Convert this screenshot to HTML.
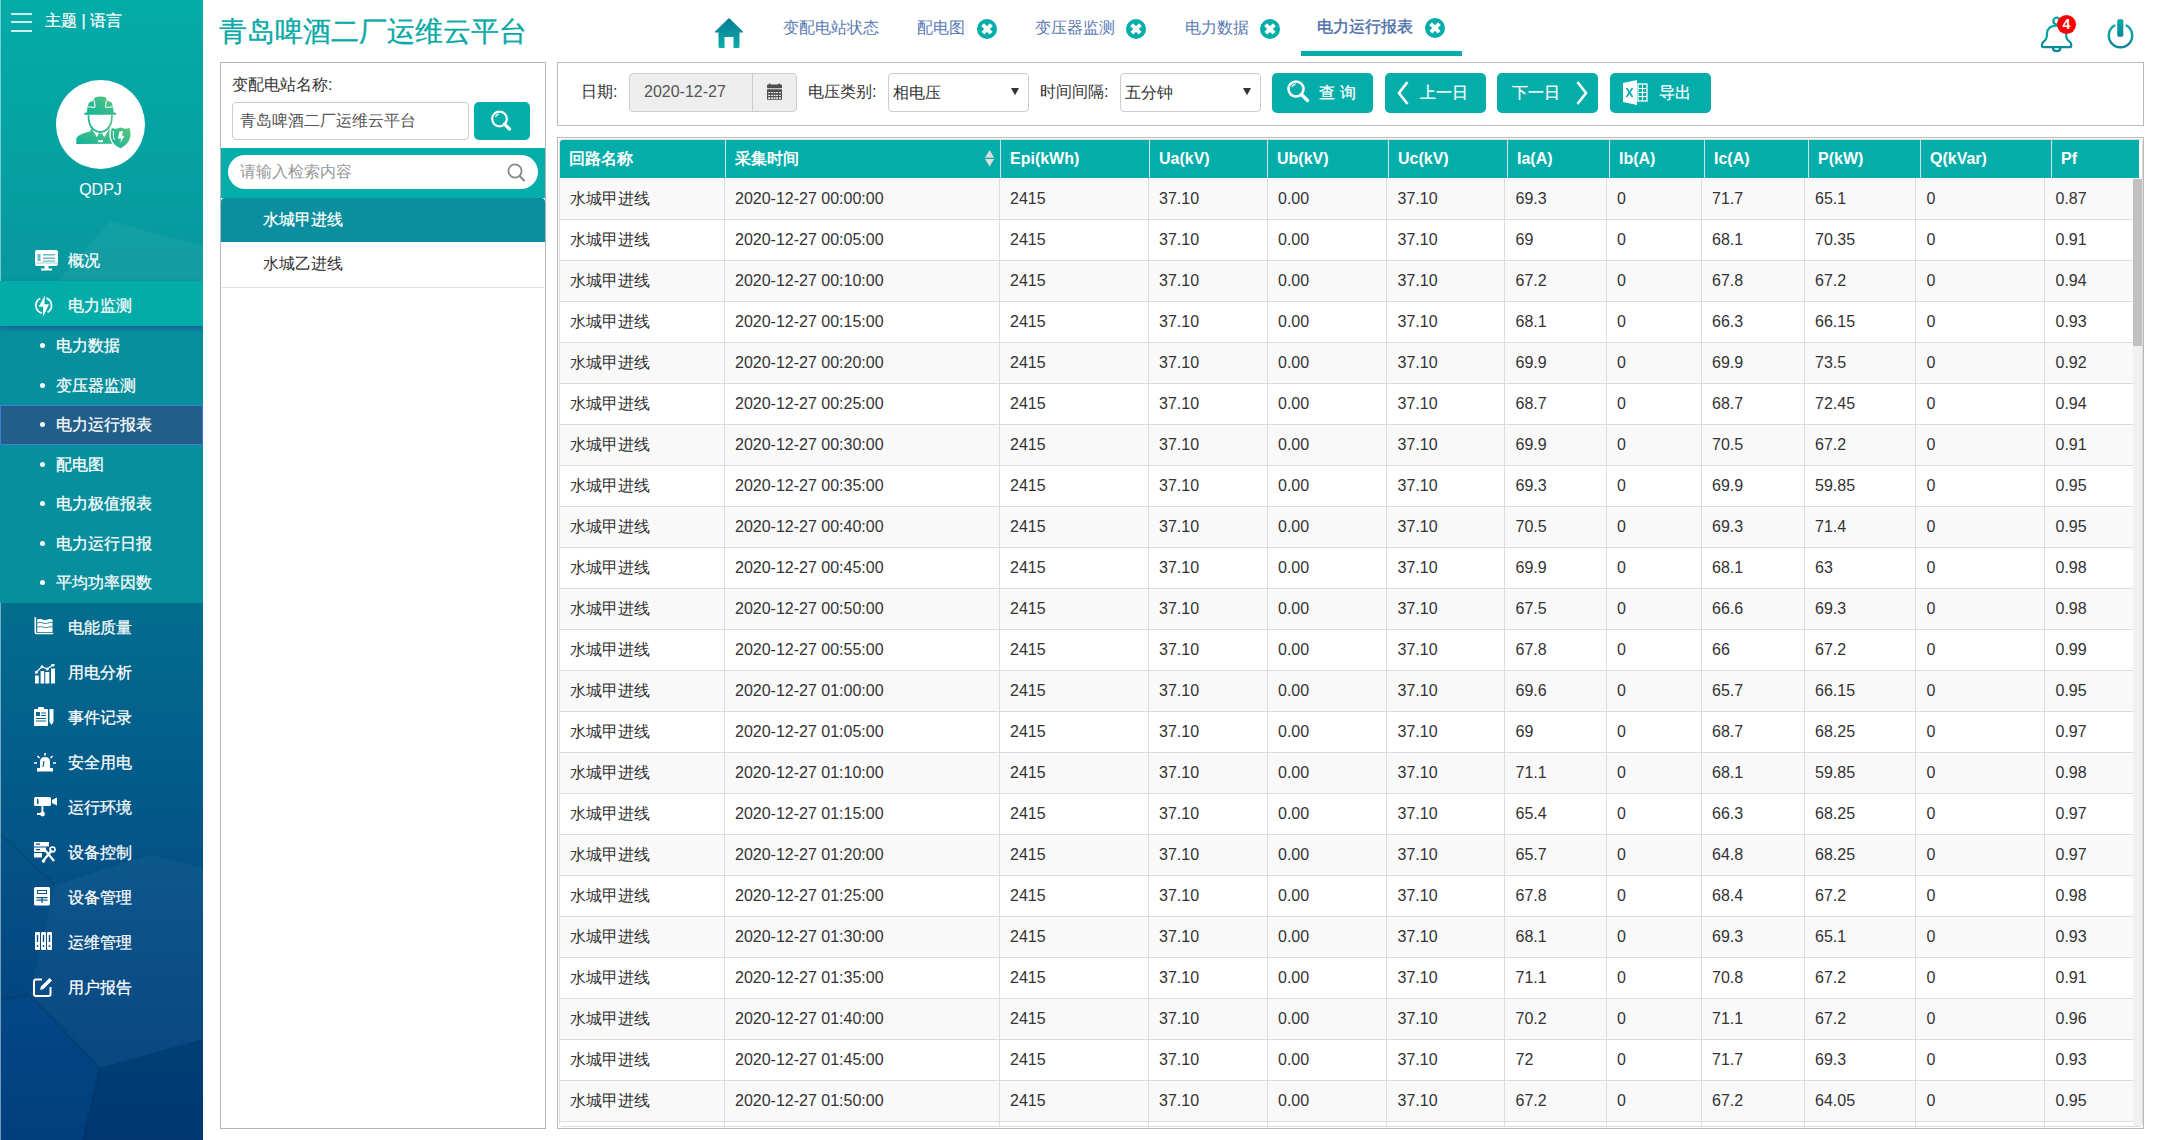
<!DOCTYPE html>
<html><head><meta charset="utf-8">
<style>
*{box-sizing:border-box}
html,body{margin:0;padding:0}
body{width:2160px;height:1140px;overflow:hidden;position:relative;background:#fff;font-family:"Liberation Sans",sans-serif;font-size:16px;color:#333}
.abs{position:absolute}
#side{position:absolute;left:0;top:0;width:203px;height:1140px;background:linear-gradient(180deg,#03aca8 0%,#08989f 24%,#05848f 45%,#026e8e 53%,#044e86 79%,#003b78 100%);overflow:hidden;color:#fff}
.ham{position:absolute;left:11px;width:21px;height:2px;background:rgba(255,255,255,.8)}
.menu{position:absolute;left:0;width:203px;height:45px;line-height:45px;font-size:16px;color:#fff;-webkit-text-stroke:.25px #fff}
.menu .ic{position:absolute;left:34px;top:12px;width:22px;height:22px}
.menu .tx{position:absolute;left:68px;top:2px}
.sub{position:absolute;left:0;width:203px;height:39.5px;line-height:39.5px;font-size:16px;color:#fff;-webkit-text-stroke:.25px #fff}
.sub:before{content:"";position:absolute;left:40px;top:17px;width:5px;height:5px;border-radius:50%;background:#fff}
.sub .tx{position:absolute;left:56px;top:0}
#title{position:absolute;left:219px;top:13px;font-size:28.3px;line-height:36px;color:#08a9a6;white-space:nowrap;-webkit-text-stroke:.3px #08a9a6}
.tab{position:absolute;top:16px;font-size:16px;line-height:24px;color:#5a7ab3;white-space:nowrap}
.xc{position:absolute;width:20px;height:20px;border-radius:50%;background:#03ada9}
.xc:before,.xc:after{content:"";position:absolute;left:4px;top:7.5px;width:12px;height:3.6px;background:#fff;transform:rotate(45deg)}
.xc:after{transform:rotate(-45deg)}
.panel{position:absolute;border:1px solid #b9b9b9;background:#fff}
.btn{position:absolute;top:73px;height:40px;border-radius:5px;background:#03ada9;color:#fff;font-size:16px;line-height:39px}
table{border-collapse:collapse;table-layout:fixed}
#hd{position:absolute;left:560px;top:140px;width:1579px;height:38px;background:#05aba7}
#hd td{height:38px;padding:0 0 0 11px;color:#fff;font-weight:bold;font-size:16px;border-left:1px solid #e8f6f6;white-space:nowrap}
#hd td:first-child{border-left:none}
#bd{position:absolute;left:560px;top:178px;width:1573px}
#bd td{height:41px;padding:0 0 0 11px;font-size:16px;color:#333;border:1px solid #dddddd;border-top:none;white-space:nowrap;overflow:hidden}
#bd tr:nth-child(odd) td{background:#f9f9f9}
#bd tr:nth-child(even) td{background:#fff}
.hdt{top:140px;height:38px;line-height:38px;color:#fff;font-weight:bold;font-size:16px;white-space:nowrap}
.bdt{height:41px;line-height:41px;font-size:16px;color:#333;white-space:nowrap}
</style></head><body>
<div id="side">
  <svg class="abs" style="left:0;top:0" width="203" height="1140" viewBox="0 0 203 1140">
    <polygon points="110,221 203,246 203,281 58,281" fill="#fff" opacity=".045"/>
    <polygon points="55,885 150,855 203,868 203,1039 100,1068 30,995" fill="#fff" opacity=".035"/>
    <polygon points="0,1000 30,995 100,1068 83,1140 0,1140" fill="#1a6ad0" opacity=".08"/>
    <polygon points="100,1068 203,1039 203,1140 83,1140" fill="#000" opacity=".06"/>
    <path d="M0 834 L55 885 M0 1000 L30 995 L100 1068 L83 1140" stroke="#000" stroke-opacity=".07" stroke-width="3" fill="none"/>
    <rect x="0" y="0" width="1" height="1140" fill="#fff" opacity=".45"/>
  </svg>
  <div class="ham" style="top:13px"></div>
  <div class="ham" style="top:21px"></div>
  <div class="ham" style="top:30px"></div>
  <div class="abs" style="left:45px;top:9px;font-size:16px;line-height:24px;color:#fff;white-space:nowrap;-webkit-text-stroke:.25px #fff">主题 | 语言</div>
  <div class="abs" style="left:56px;top:80px;width:89px;height:89px;border-radius:50%;background:#fff"></div>
  <svg class="abs" style="left:56px;top:80px" width="89" height="89" viewBox="0 0 89 89">
    <defs><linearGradient id="ag" x1="0" y1="1" x2="1" y2="0"><stop offset="0" stop-color="#10b2a0"/><stop offset="1" stop-color="#5dc679"/></linearGradient></defs>
    <path fill="url(#ag)" d="M28.3 34.8 L28.5 33 L31 32.3 Q31.2 26 33 22.5 L38 20.3 L38.6 17.6 Q44.2 15.2 50 17.6 L50.6 20.3 L55.6 22.5 Q57.5 26 57.6 32.3 L60 33 L60.3 34.8 Z"/>
    <path fill="none" stroke="#fff" stroke-width="1.1" d="M38.2 20.5 L39.2 27.2 M50.4 20.5 L49.5 27.2 M32 26.8 L39 27.5 M49.6 27.5 L57 26.8"/>
    <path fill="none" stroke="url(#ag)" stroke-width="1.8" d="M32.5 35 Q32.3 50.5 44.3 52.2 Q56 50.5 56 35"/>
    <path fill="url(#ag)" d="M20.3 64 L20.3 58.5 Q22 54 34.5 51.3 L35 48 L36.3 49.5 L40.8 57.3 L42.8 53.3 L44.3 53.6 L45.9 53.3 L48.2 57.3 L53 49.5 L54.2 48.2 L57.2 52 L56.8 63.8 Z"/>
    <path fill="#fff" d="M42 60.2 h5 v2 h-5z"/>
    <path fill="#fff" d="M54.6 47.2 Q56 48 56.8 48.5 L56.8 64 L55 64 Q54.3 56 54.6 47.2Z" opacity="0"/>
    <path fill="url(#ag)" stroke="#fff" stroke-width="1.4" d="M55.2 47.2 Q59 49 64.5 46.5 Q70 49 74.2 47.2 Q75.5 51 75 57 Q73.5 65 64.5 69.2 Q55.5 65 54.2 57 Q53.7 51 55.2 47.2Z"/>
    <path fill="none" stroke="#fff" stroke-width="1" d="M57.4 51 Q57 56 58.2 60"/>
    <path fill="#fff" d="M63.6 51.2 L67.2 51.2 L65.8 55.6 L68.3 56.1 L64.3 63.2 L65.1 58.6 L62 58.4 Z"/>
  </svg>
  <div class="abs" style="left:0;top:178px;width:201px;text-align:center;font-size:16px;line-height:24px;color:#fff">QDPJ</div>

  <div class="menu" style="top:236px">
    <svg class="abs" style="left:35px;top:14px" width="23" height="21" viewBox="0 0 23 21"><rect x="0" y="0" width="23" height="16" rx="2" fill="#fff"/><rect x="2.5" y="4" width="3" height="7" fill="#0b8f9e" opacity=".6"/><rect x="8" y="4" width="12" height="1.5" fill="#0b8f9e" opacity=".6"/><rect x="8" y="7.5" width="12" height="1.5" fill="#0b8f9e" opacity=".6"/><rect x="8" y="10.5" width="12" height="1.2" fill="#0b8f9e" opacity=".6"/><rect x="0" y="12.5" width="23" height="1" fill="#0b8f9e" opacity=".4"/><rect x="9.5" y="16" width="4" height="3" fill="#fff"/><rect x="6" y="18.5" width="11" height="2" fill="#fff"/></svg>
    <span class="tx">概况</span>
  </div>
  
  <div class="menu" style="top:281px;z-index:2">
    <svg class="abs" style="left:35px;top:14px" width="18" height="23" viewBox="0 0 18 23"><path d="M5.28 3.49 A7.8 7.8 0 0 0 7.08 18.13 M11.37 3.17 A7.8 7.8 0 0 1 12.48 17.32" fill="none" stroke="#fff" stroke-width="1.7"/><path d="M10 0.2 L3.6 11.8 L8.2 11.8 L7.9 22 L14 9.2 L9.3 9.2 Z" fill="#fff"/></svg>
    <span class="tx">电力监测</span>
  </div>
  <div class="abs" style="left:0;top:326px;width:203px;height:277px;background:#088f9d"></div>
  <div class="abs" style="left:0;top:281px;width:203px;height:45px;background:#02aca8;box-shadow:0 3px 5px rgba(45,55,150,.5);z-index:1"></div>
  <div class="abs" style="left:0;top:404.5px;width:203px;height:40px;background:#235d8a;border:1px solid #3b7fd3"></div>
  <div class="sub" style="top:326px"><span class="tx">电力数据</span></div>
  <div class="sub" style="top:365.5px"><span class="tx">变压器监测</span></div>
  <div class="sub" style="top:405px"><span class="tx">电力运行报表</span></div>
  <div class="sub" style="top:444.5px"><span class="tx">配电图</span></div>
  <div class="sub" style="top:484px"><span class="tx">电力极值报表</span></div>
  <div class="sub" style="top:523.5px"><span class="tx">电力运行日报</span></div>
  <div class="sub" style="top:563px"><span class="tx">平均功率因数</span></div>

  <div class="menu" style="top:603px">
    <svg class="abs" style="left:34px;top:14px" width="20" height="18" viewBox="0 0 20 18"><path d="M1.3 0.3 V15.3 Q1.3 16.5 2.5 16.5 H19.2" fill="none" stroke="#fff" stroke-width="1.6"/><path d="M3.2 2.6 Q5.5 1.2 8.5 2.4 Q11.5 3.6 14.5 2.2 Q16.5 1.4 18.5 2.6 V15 H3.2Z" fill="#fff"/><path d="M3.2 6 Q6 4.6 9 5.9 Q12 7.2 15 5.8 Q17 5 18.5 5.8 M3.2 10.2 Q6 8.8 9 10.1 Q12 11.4 15 10 Q17 9.2 18.5 10" fill="none" stroke="#07708f" stroke-width="1.1" opacity=".75"/></svg>
    <span class="tx">电能质量</span>
  </div>
  <div class="menu" style="top:648px">
    <svg class="abs" style="left:35px;top:15.5px" width="21" height="20" viewBox="0 0 21 20"><rect x="0" y="11.5" width="3.8" height="8" fill="#fff"/><rect x="5.6" y="7" width="3.6" height="12.5" fill="#fff"/><rect x="10.3" y="8" width="4" height="11.5" fill="#fff"/><rect x="16" y="4.5" width="4" height="15" fill="#fff"/><path d="M1.3 8.3 L7 2.7 L12.3 5 L18 0.8" fill="none" stroke="#fff" stroke-width="1.2"/><circle cx="1.3" cy="8.3" r="1.5" fill="#fff"/><circle cx="7" cy="2.7" r="1.5" fill="#fff"/><circle cx="12.3" cy="5" r="1.5" fill="#fff"/><circle cx="18" cy="0.9" r="1.6" fill="#fff"/></svg>
    <span class="tx">用电分析</span>
  </div>
  <div class="menu" style="top:693px">
    <svg class="abs" style="left:34px;top:14px" width="20" height="19" viewBox="0 0 20 19"><rect x="0" y="2" width="14" height="17" rx="1" fill="#fff"/><rect x="4" y="0" width="6" height="3" rx="1" fill="#fff"/><rect x="2" y="5" width="4" height="4" fill="#066c8d"/><rect x="7" y="5.5" width="5" height="1" fill="#066c8d"/><rect x="7" y="8" width="5" height="1" fill="#066c8d"/><rect x="2" y="11" width="10" height="1" fill="#066c8d"/><rect x="2" y="13.5" width="10" height="1" fill="#066c8d"/><path d="M15.5 2 h4 v13 l-2 3 l-2 -3z" fill="#fff"/></svg>
    <span class="tx">事件记录</span>
  </div>
  <div class="menu" style="top:738px">
    <svg class="abs" style="left:34px;top:15px" width="22" height="19" viewBox="0 0 22 19"><path d="M6 15 V9 Q6 4 11 4 Q16 4 16 9 V15Z" fill="#fff"/><rect x="3" y="15" width="16" height="3.5" fill="#fff"/><path d="M10 8 L9 14" stroke="#06668b" stroke-width="1.2"/><path d="M11 0 V2.5 M3.5 3 L5.5 5 M18.5 3 L16.5 5 M0 10 H3 M19 10 H22" stroke="#fff" stroke-width="1.6"/></svg>
    <span class="tx">安全用电</span>
  </div>
  <div class="menu" style="top:783px">
    <svg class="abs" style="left:34px;top:14px" width="24" height="21" viewBox="0 0 24 21"><rect x="0" y="0" width="17" height="9" rx="1.5" fill="#fff"/><rect x="3" y="2" width="1.5" height="5" fill="#06628a"/><path d="M18 3 L23 0.5 V8.5 L18 6Z" fill="#fff"/><rect x="7.5" y="9" width="1.8" height="8" fill="#fff"/><rect x="3" y="16" width="6" height="2" fill="#fff"/><circle cx="8.5" cy="17" r="2.4" fill="#fff"/></svg>
    <span class="tx">运行环境</span>
  </div>
  <div class="menu" style="top:828px">
    <svg class="abs" style="left:34px;top:14px" width="22" height="21" viewBox="0 0 22 21"><rect x="0" y="0" width="15" height="4.5" fill="#fff"/><rect x="0" y="5.5" width="12" height="4.5" fill="#fff"/><rect x="0" y="11" width="8" height="4.5" fill="#fff"/><rect x="2" y="1.5" width="4" height="1.3" fill="#06598a"/><rect x="2" y="7" width="4" height="1.3" fill="#06598a"/><path d="M9 19 L18 8 M11 8 L20 19" stroke="#fff" stroke-width="2.2"/><circle cx="18.5" cy="7.5" r="2.5" fill="none" stroke="#fff" stroke-width="1.6"/><circle cx="9.5" cy="19" r="1.8" fill="#fff"/></svg>
    <span class="tx">设备控制</span>
  </div>
  <div class="menu" style="top:873px">
    <svg class="abs" style="left:34px;top:14px" width="17" height="19" viewBox="0 0 17 19"><rect x="0" y="0" width="16" height="18.5" rx="1.5" fill="#fff"/><rect x="3" y="3" width="10" height="4" fill="#065589"/><rect x="4" y="4" width="8" height="2" fill="#fff"/><rect x="2.5" y="10" width="11" height="1.2" fill="#065589"/><rect x="2.5" y="12.5" width="11" height="1.2" fill="#065589"/><rect x="7.4" y="10" width="1.2" height="6" fill="#065589"/></svg>
    <span class="tx">设备管理</span>
  </div>
  <div class="menu" style="top:918px">
    <svg class="abs" style="left:35px;top:14px" width="17" height="18" viewBox="0 0 17 18"><rect x="0" y="0" width="5" height="18" rx="1" fill="#fff"/><rect x="6" y="0" width="5" height="18" rx="1" fill="#fff"/><rect x="12" y="0" width="5" height="18" rx="1" fill="#fff"/><rect x="1.8" y="3" width="1.4" height="7" fill="#065087"/><rect x="7.8" y="3" width="1.4" height="7" fill="#065087"/><rect x="13.8" y="3" width="1.4" height="7" fill="#065087"/><circle cx="2.5" cy="14" r=".9" fill="#065087"/><circle cx="8.5" cy="14" r=".9" fill="#065087"/><circle cx="14.5" cy="14" r=".9" fill="#065087"/></svg>
    <span class="tx">运维管理</span>
  </div>
  <div class="menu" style="top:963px">
    <svg class="abs" style="left:33px;top:14px" width="20" height="20" viewBox="0 0 20 20"><path d="M9 2.5 H3 Q1 2.5 1 4.5 V17 Q1 19 3 19 H15.5 Q17.5 19 17.5 17 V10" fill="none" stroke="#fff" stroke-width="2"/><path d="M7 13 L8 9.5 L16.5 1 L19 3.5 L10.5 12Z" fill="#fff"/></svg>
    <span class="tx">用户报告</span>
  </div>
</div>
<div id="title">青岛啤酒二厂运维云平台</div>
<svg class="abs" style="left:714px;top:18px" width="30" height="30" viewBox="0 0 30 30"><defs><linearGradient id="hg" x1="0" y1="0" x2="0" y2="1"><stop offset="0" stop-color="#087a93"/><stop offset="1" stop-color="#0aaea9"/></linearGradient></defs><path fill="url(#hg)" d="M15 0 L29 13.5 Q30 14.5 28.5 14.5 L25.5 14.5 V28.5 Q25.5 30 24 30 H19.5 V19 H10.5 V30 H6 Q4.5 30 4.5 28.5 V14.5 H1.5 Q0 14.5 1 13.5Z"/></svg>
<div class="tab" style="left:783px">变配电站状态</div>
<div class="tab" style="left:917px">配电图</div><div class="xc" style="left:977px;top:19px"></div>
<div class="tab" style="left:1035px">变压器监测</div><div class="xc" style="left:1126px;top:19px"></div>
<div class="tab" style="left:1185px">电力数据</div><div class="xc" style="left:1260px;top:19px"></div>
<div class="tab" style="left:1317px;top:15px;color:#4a6ea8;-webkit-text-stroke:0.4px #4a6ea8">电力运行报表</div><div class="xc" style="left:1425px;top:18px"></div>
<div class="abs" style="left:1301px;top:51px;width:161px;height:5px;background:#05aca8"></div>

<svg class="abs" style="left:2040px;top:16px" width="34" height="38" viewBox="0 0 34 38"><defs><linearGradient id="bg1" x1="0" y1="0" x2="0" y2="1"><stop offset="0" stop-color="#0aa9a8"/><stop offset="1" stop-color="#0b8797"/></linearGradient></defs><circle cx="16.7" cy="5.1" r="3.4" fill="none" stroke="url(#bg1)" stroke-width="2.2"/><path fill="none" stroke="url(#bg1)" stroke-width="2.2" d="M16.5 9.6 Q7.5 9.6 7 17.5 L6.8 20.5 Q6.5 23.5 3.8 25.5 Q2 26.8 2 28.5 V30.5 Q2 31.2 3.5 31.2 H30 Q31.2 31.2 31.2 30.5 V28.5 Q31.2 26.8 29.5 25.5 Q26.5 23.5 26.3 20.5 L26.1 17.5 Q25.6 9.6 16.5 9.6Z M13 32 Q13 35.2 16.7 35.2 Q20.4 35.2 20.4 32"/></svg>
<div class="abs" style="left:2057px;top:15px;width:19px;height:19px;border-radius:50%;background:#fe0000;color:#fff;font-size:14px;line-height:19px;text-align:center;font-weight:bold">4</div>
<svg class="abs" style="left:2106px;top:18px" width="29" height="32" viewBox="0 0 29 32"><defs><linearGradient id="pg" x1="0" y1="0" x2="0" y2="1"><stop offset="0" stop-color="#0aaba9"/><stop offset="1" stop-color="#0b8598"/></linearGradient></defs><path fill="none" stroke="url(#pg)" stroke-width="2.4" stroke-linecap="round" d="M8.37 7.6 A11.7 11.7 0 1 0 20.63 7.6"/><rect x="11.2" y="1.2" width="6.1" height="17.5" rx="1.6" fill="url(#pg)"/></svg>

<!-- left panel -->
<div class="panel" style="left:220px;top:62px;width:326px;height:1067px;border-color:#b5b5b5"></div>
<div class="abs" style="left:232px;top:73px;font-size:16px;line-height:24px;color:#333">变配电站名称:</div>
<div class="abs" style="left:232px;top:102px;width:237px;height:38px;border:1px solid #cccccc;border-radius:4px;background:#fff;font-size:16px;line-height:36px;padding-left:7px;color:#555;white-space:nowrap">青岛啤酒二厂运维云平台</div>
<div class="abs" style="left:474px;top:102px;width:56px;height:38px;border-radius:5px;background:#03ada9"></div>
<svg class="abs" style="left:488px;top:108px" width="28" height="26" viewBox="0 0 28 26"><circle cx="11.5" cy="11" r="7.3" fill="none" stroke="#fff" stroke-width="2.2"/><path d="M7.5 9 Q8.5 6.5 11 6" fill="none" stroke="#fff" stroke-width="1.2"/><path d="M16.5 16 L21.5 21" stroke="#fff" stroke-width="3.2" stroke-linecap="round"/></svg>
<div class="abs" style="left:221px;top:148px;width:324px;height:50px;background:#03ada9"></div>
<div class="abs" style="left:228px;top:155px;width:310px;height:34px;border-radius:17px;background:#fff;font-size:16px;line-height:34px;padding-left:12px;color:#999">请输入检索内容</div>
<svg class="abs" style="left:506px;top:162px" width="22" height="22" viewBox="0 0 22 22"><circle cx="9" cy="9" r="6.6" fill="none" stroke="#888" stroke-width="1.8"/><path d="M13.5 13.8 L18.5 19" stroke="#888" stroke-width="2"/></svg>
<div class="abs" style="left:221px;top:198px;width:324px;height:44px;background:#fff"></div><div class="abs" style="left:221px;top:198px;width:324px;height:44px;background:#098f9e;border-radius:4px 4px 0 0"></div>
<div class="abs" style="left:263px;top:198px;font-size:16px;line-height:44px;color:#fff;-webkit-text-stroke:.25px #fff">水城甲进线</div>
<div class="abs" style="left:263px;top:242px;font-size:16px;line-height:44px;color:#333">水城乙进线</div>
<div class="abs" style="left:222px;top:287px;width:322px;height:1px;background:#dddddd"></div>

<!-- toolbar -->
<div class="panel" style="left:557px;top:62px;width:1587px;height:64px"></div>
<div class="abs" style="left:581px;top:80px;font-size:16px;line-height:24px;color:#333">日期:</div>
<div class="abs" style="left:629px;top:73px;width:168px;height:39px;border:1px solid #cccccc;border-radius:4px;background:#eeeeee"></div>
<div class="abs" style="left:752px;top:73px;width:1px;height:39px;background:#cccccc"></div>
<div class="abs" style="left:644px;top:73px;font-size:16px;line-height:38px;color:#555">2020-12-27</div>
<svg class="abs" style="left:767px;top:83px" width="15" height="17" viewBox="0 0 15 17"><rect x="0" y="1.6" width="15" height="3.6" rx="1" fill="#4f4f4f"/><circle cx="2.8" cy="1.6" r="1.1" fill="#4f4f4f"/><circle cx="12.2" cy="1.6" r="1.1" fill="#4f4f4f"/><rect x="0" y="6.2" width="15" height="10.6" rx=".6" fill="#4f4f4f"/><g fill="#eee"><rect x="1.1" y="9.0" width="1.9" height="1.1"/><rect x="1.1" y="11.8" width="1.9" height="1.2"/><rect x="1.1" y="14.2" width="1.9" height="1.7"/><rect x="3.9" y="9.0" width="1.9" height="1.1"/><rect x="3.9" y="11.8" width="1.9" height="1.2"/><rect x="3.9" y="14.2" width="1.9" height="1.7"/><rect x="6.6" y="9.0" width="1.9" height="1.1"/><rect x="6.6" y="11.8" width="1.9" height="1.2"/><rect x="6.6" y="14.2" width="1.9" height="1.7"/><rect x="9.1" y="9.0" width="1.9" height="1.1"/><rect x="9.1" y="11.8" width="1.9" height="1.2"/><rect x="9.1" y="14.2" width="1.9" height="1.7"/><rect x="12.0" y="9.0" width="1.9" height="1.1"/><rect x="12.0" y="11.8" width="1.9" height="1.2"/><rect x="12.0" y="14.2" width="1.9" height="1.7"/></g></svg>
<div class="abs" style="left:808px;top:80px;font-size:16px;line-height:24px;color:#333">电压类别:</div>
<div class="abs" style="left:888px;top:73px;width:141px;height:39px;border:1px solid #cccccc;border-radius:4px;background:#fff;font-size:16px;line-height:38px;padding-left:4px;color:#333">相电压</div>
<svg class="abs" style="left:1011px;top:88px" width="8" height="8" viewBox="0 0 8 8"><path d="M0 0 H8 L4 7.3Z" fill="#333"/></svg>
<div class="abs" style="left:1040px;top:80px;font-size:16px;line-height:24px;color:#333">时间间隔:</div>
<div class="abs" style="left:1120px;top:73px;width:141px;height:39px;border:1px solid #cccccc;border-radius:4px;background:#fff;font-size:16px;line-height:38px;padding-left:4px;color:#333">五分钟</div>
<svg class="abs" style="left:1243px;top:88px" width="8" height="8" viewBox="0 0 8 8"><path d="M0 0 H8 L4 7.3Z" fill="#333"/></svg>

<div class="btn" style="left:1272px;width:101px"></div>
<svg class="abs" style="left:1286px;top:79px" width="26" height="26" viewBox="0 0 26 26"><circle cx="10" cy="10" r="7.5" fill="none" stroke="#fff" stroke-width="2.6"/><path d="M6 8 Q7 5.5 9.5 5" fill="none" stroke="#fff" stroke-width="1.3"/><path d="M15.5 15.5 L21.5 21.5" stroke="#fff" stroke-width="3.4" stroke-linecap="round"/></svg>
<div class="abs" style="left:1319px;top:73px;font-size:16px;line-height:39px;color:#fff;letter-spacing:5px;-webkit-text-stroke:.25px #fff">查询</div>
<div class="btn" style="left:1385px;width:101px"></div>
<svg class="abs" style="left:1396px;top:80px" width="14" height="26" viewBox="0 0 14 26"><path d="M11.5 2 L3 13 L11.5 24" fill="none" stroke="#fff" stroke-width="2.6"/></svg>
<div class="abs" style="left:1420px;top:73px;font-size:16px;line-height:39px;color:#fff;-webkit-text-stroke:.25px #fff">上一日</div>
<div class="btn" style="left:1497px;width:101px"></div>
<div class="abs" style="left:1512px;top:73px;font-size:16px;line-height:39px;color:#fff;-webkit-text-stroke:.25px #fff">下一日</div>
<svg class="abs" style="left:1575px;top:80px" width="14" height="26" viewBox="0 0 14 26"><path d="M2.5 2 L11 13 L2.5 24" fill="none" stroke="#fff" stroke-width="2.6"/></svg>
<div class="btn" style="left:1610px;width:101px"></div>
<svg class="abs" style="left:1623px;top:80px" width="25" height="25" viewBox="0 0 25 25"><path d="M0 3 L14 0 V25 L0 22Z" fill="#fff"/><path d="M3.5 8 L9.5 17 M9.5 8 L3.5 17" stroke="#05aba7" stroke-width="1.6"/><rect x="15" y="4" width="9" height="17" fill="none" stroke="#fff" stroke-width="1.3"/><path d="M15 8.5 H24 M15 12.5 H24 M15 16.5 H24 M19.5 4 V21" stroke="#fff" stroke-width="1.1"/></svg>
<div class="abs" style="left:1659px;top:73px;font-size:16px;line-height:39px;color:#fff;-webkit-text-stroke:.25px #fff">导出</div>

<!-- grid -->
<div class="panel" style="left:557px;top:137px;width:1587px;height:992px"></div>
<div class="abs" style="left:559px;top:139px;width:1584px;height:988px;border:1px solid #dddddd;border-radius:4px;overflow:hidden;background:#fff"></div>
<div class="abs" style="left:560px;top:140px;width:1579px;height:38px;background:#03ada9;border-top-left-radius:3px"></div>
<div class="abs hdt" style="left:569px">回路名称</div>
<div class="abs" style="left:725px;top:140px;width:1px;height:38px;background:#dddddd"></div>
<div class="abs hdt" style="left:735px">采集时间</div>
<div class="abs" style="left:1000px;top:140px;width:1px;height:38px;background:#dddddd"></div>
<div class="abs hdt" style="left:1010px">Epi(kWh)</div>
<div class="abs" style="left:1149px;top:140px;width:1px;height:38px;background:#dddddd"></div>
<div class="abs hdt" style="left:1159px">Ua(kV)</div>
<div class="abs" style="left:1267px;top:140px;width:1px;height:38px;background:#dddddd"></div>
<div class="abs hdt" style="left:1277px">Ub(kV)</div>
<div class="abs" style="left:1388px;top:140px;width:1px;height:38px;background:#dddddd"></div>
<div class="abs hdt" style="left:1398px">Uc(kV)</div>
<div class="abs" style="left:1507px;top:140px;width:1px;height:38px;background:#dddddd"></div>
<div class="abs hdt" style="left:1517px">Ia(A)</div>
<div class="abs" style="left:1609px;top:140px;width:1px;height:38px;background:#dddddd"></div>
<div class="abs hdt" style="left:1619px">Ib(A)</div>
<div class="abs" style="left:1704px;top:140px;width:1px;height:38px;background:#dddddd"></div>
<div class="abs hdt" style="left:1714px">Ic(A)</div>
<div class="abs" style="left:1808px;top:140px;width:1px;height:38px;background:#dddddd"></div>
<div class="abs hdt" style="left:1818px">P(kW)</div>
<div class="abs" style="left:1920px;top:140px;width:1px;height:38px;background:#dddddd"></div>
<div class="abs hdt" style="left:1930px">Q(kVar)</div>
<div class="abs" style="left:2051px;top:140px;width:1px;height:38px;background:#dddddd"></div>
<div class="abs hdt" style="left:2061px">Pf</div>
<svg class="abs" style="left:985px;top:150px" width="10" height="17" viewBox="0 0 10 17"><path d="M4.6 0 L9.2 7.8 H0Z M4.6 16.6 L9.2 9 H0Z" fill="#dedcdc"/></svg>
<div class="abs" style="left:560px;top:178px;width:1573px;height:948px;overflow:hidden">
<div class="abs" style="left:0;top:0px;width:1573px;height:42px;background:#f9f9f9;border-bottom:1px solid #dddddd"></div>
<div class="abs bdt" style="left:10px;top:0px">水城甲进线</div>
<div class="abs bdt" style="left:175px;top:0px">2020-12-27 00:00:00</div>
<div class="abs bdt" style="left:450px;top:0px">2415</div>
<div class="abs bdt" style="left:599px;top:0px">37.10</div>
<div class="abs bdt" style="left:718px;top:0px">0.00</div>
<div class="abs bdt" style="left:837.5px;top:0px">37.10</div>
<div class="abs bdt" style="left:955.5px;top:0px">69.3</div>
<div class="abs bdt" style="left:1057.0px;top:0px">0</div>
<div class="abs bdt" style="left:1152.0px;top:0px">71.7</div>
<div class="abs bdt" style="left:1255.0px;top:0px">65.1</div>
<div class="abs bdt" style="left:1366.5px;top:0px">0</div>
<div class="abs bdt" style="left:1495.5px;top:0px">0.87</div>
<div class="abs" style="left:0;top:42px;width:1573px;height:41px;background:#ffffff;border-bottom:1px solid #dddddd"></div>
<div class="abs bdt" style="left:10px;top:41px">水城甲进线</div>
<div class="abs bdt" style="left:175px;top:41px">2020-12-27 00:05:00</div>
<div class="abs bdt" style="left:450px;top:41px">2415</div>
<div class="abs bdt" style="left:599px;top:41px">37.10</div>
<div class="abs bdt" style="left:718px;top:41px">0.00</div>
<div class="abs bdt" style="left:837.5px;top:41px">37.10</div>
<div class="abs bdt" style="left:955.5px;top:41px">69</div>
<div class="abs bdt" style="left:1057.0px;top:41px">0</div>
<div class="abs bdt" style="left:1152.0px;top:41px">68.1</div>
<div class="abs bdt" style="left:1255.0px;top:41px">70.35</div>
<div class="abs bdt" style="left:1366.5px;top:41px">0</div>
<div class="abs bdt" style="left:1495.5px;top:41px">0.91</div>
<div class="abs" style="left:0;top:83px;width:1573px;height:41px;background:#f9f9f9;border-bottom:1px solid #dddddd"></div>
<div class="abs bdt" style="left:10px;top:82px">水城甲进线</div>
<div class="abs bdt" style="left:175px;top:82px">2020-12-27 00:10:00</div>
<div class="abs bdt" style="left:450px;top:82px">2415</div>
<div class="abs bdt" style="left:599px;top:82px">37.10</div>
<div class="abs bdt" style="left:718px;top:82px">0.00</div>
<div class="abs bdt" style="left:837.5px;top:82px">37.10</div>
<div class="abs bdt" style="left:955.5px;top:82px">67.2</div>
<div class="abs bdt" style="left:1057.0px;top:82px">0</div>
<div class="abs bdt" style="left:1152.0px;top:82px">67.8</div>
<div class="abs bdt" style="left:1255.0px;top:82px">67.2</div>
<div class="abs bdt" style="left:1366.5px;top:82px">0</div>
<div class="abs bdt" style="left:1495.5px;top:82px">0.94</div>
<div class="abs" style="left:0;top:124px;width:1573px;height:41px;background:#ffffff;border-bottom:1px solid #dddddd"></div>
<div class="abs bdt" style="left:10px;top:123px">水城甲进线</div>
<div class="abs bdt" style="left:175px;top:123px">2020-12-27 00:15:00</div>
<div class="abs bdt" style="left:450px;top:123px">2415</div>
<div class="abs bdt" style="left:599px;top:123px">37.10</div>
<div class="abs bdt" style="left:718px;top:123px">0.00</div>
<div class="abs bdt" style="left:837.5px;top:123px">37.10</div>
<div class="abs bdt" style="left:955.5px;top:123px">68.1</div>
<div class="abs bdt" style="left:1057.0px;top:123px">0</div>
<div class="abs bdt" style="left:1152.0px;top:123px">66.3</div>
<div class="abs bdt" style="left:1255.0px;top:123px">66.15</div>
<div class="abs bdt" style="left:1366.5px;top:123px">0</div>
<div class="abs bdt" style="left:1495.5px;top:123px">0.93</div>
<div class="abs" style="left:0;top:165px;width:1573px;height:41px;background:#f9f9f9;border-bottom:1px solid #dddddd"></div>
<div class="abs bdt" style="left:10px;top:164px">水城甲进线</div>
<div class="abs bdt" style="left:175px;top:164px">2020-12-27 00:20:00</div>
<div class="abs bdt" style="left:450px;top:164px">2415</div>
<div class="abs bdt" style="left:599px;top:164px">37.10</div>
<div class="abs bdt" style="left:718px;top:164px">0.00</div>
<div class="abs bdt" style="left:837.5px;top:164px">37.10</div>
<div class="abs bdt" style="left:955.5px;top:164px">69.9</div>
<div class="abs bdt" style="left:1057.0px;top:164px">0</div>
<div class="abs bdt" style="left:1152.0px;top:164px">69.9</div>
<div class="abs bdt" style="left:1255.0px;top:164px">73.5</div>
<div class="abs bdt" style="left:1366.5px;top:164px">0</div>
<div class="abs bdt" style="left:1495.5px;top:164px">0.92</div>
<div class="abs" style="left:0;top:206px;width:1573px;height:41px;background:#ffffff;border-bottom:1px solid #dddddd"></div>
<div class="abs bdt" style="left:10px;top:205px">水城甲进线</div>
<div class="abs bdt" style="left:175px;top:205px">2020-12-27 00:25:00</div>
<div class="abs bdt" style="left:450px;top:205px">2415</div>
<div class="abs bdt" style="left:599px;top:205px">37.10</div>
<div class="abs bdt" style="left:718px;top:205px">0.00</div>
<div class="abs bdt" style="left:837.5px;top:205px">37.10</div>
<div class="abs bdt" style="left:955.5px;top:205px">68.7</div>
<div class="abs bdt" style="left:1057.0px;top:205px">0</div>
<div class="abs bdt" style="left:1152.0px;top:205px">68.7</div>
<div class="abs bdt" style="left:1255.0px;top:205px">72.45</div>
<div class="abs bdt" style="left:1366.5px;top:205px">0</div>
<div class="abs bdt" style="left:1495.5px;top:205px">0.94</div>
<div class="abs" style="left:0;top:247px;width:1573px;height:41px;background:#f9f9f9;border-bottom:1px solid #dddddd"></div>
<div class="abs bdt" style="left:10px;top:246px">水城甲进线</div>
<div class="abs bdt" style="left:175px;top:246px">2020-12-27 00:30:00</div>
<div class="abs bdt" style="left:450px;top:246px">2415</div>
<div class="abs bdt" style="left:599px;top:246px">37.10</div>
<div class="abs bdt" style="left:718px;top:246px">0.00</div>
<div class="abs bdt" style="left:837.5px;top:246px">37.10</div>
<div class="abs bdt" style="left:955.5px;top:246px">69.9</div>
<div class="abs bdt" style="left:1057.0px;top:246px">0</div>
<div class="abs bdt" style="left:1152.0px;top:246px">70.5</div>
<div class="abs bdt" style="left:1255.0px;top:246px">67.2</div>
<div class="abs bdt" style="left:1366.5px;top:246px">0</div>
<div class="abs bdt" style="left:1495.5px;top:246px">0.91</div>
<div class="abs" style="left:0;top:288px;width:1573px;height:41px;background:#ffffff;border-bottom:1px solid #dddddd"></div>
<div class="abs bdt" style="left:10px;top:287px">水城甲进线</div>
<div class="abs bdt" style="left:175px;top:287px">2020-12-27 00:35:00</div>
<div class="abs bdt" style="left:450px;top:287px">2415</div>
<div class="abs bdt" style="left:599px;top:287px">37.10</div>
<div class="abs bdt" style="left:718px;top:287px">0.00</div>
<div class="abs bdt" style="left:837.5px;top:287px">37.10</div>
<div class="abs bdt" style="left:955.5px;top:287px">69.3</div>
<div class="abs bdt" style="left:1057.0px;top:287px">0</div>
<div class="abs bdt" style="left:1152.0px;top:287px">69.9</div>
<div class="abs bdt" style="left:1255.0px;top:287px">59.85</div>
<div class="abs bdt" style="left:1366.5px;top:287px">0</div>
<div class="abs bdt" style="left:1495.5px;top:287px">0.95</div>
<div class="abs" style="left:0;top:329px;width:1573px;height:41px;background:#f9f9f9;border-bottom:1px solid #dddddd"></div>
<div class="abs bdt" style="left:10px;top:328px">水城甲进线</div>
<div class="abs bdt" style="left:175px;top:328px">2020-12-27 00:40:00</div>
<div class="abs bdt" style="left:450px;top:328px">2415</div>
<div class="abs bdt" style="left:599px;top:328px">37.10</div>
<div class="abs bdt" style="left:718px;top:328px">0.00</div>
<div class="abs bdt" style="left:837.5px;top:328px">37.10</div>
<div class="abs bdt" style="left:955.5px;top:328px">70.5</div>
<div class="abs bdt" style="left:1057.0px;top:328px">0</div>
<div class="abs bdt" style="left:1152.0px;top:328px">69.3</div>
<div class="abs bdt" style="left:1255.0px;top:328px">71.4</div>
<div class="abs bdt" style="left:1366.5px;top:328px">0</div>
<div class="abs bdt" style="left:1495.5px;top:328px">0.95</div>
<div class="abs" style="left:0;top:370px;width:1573px;height:41px;background:#ffffff;border-bottom:1px solid #dddddd"></div>
<div class="abs bdt" style="left:10px;top:369px">水城甲进线</div>
<div class="abs bdt" style="left:175px;top:369px">2020-12-27 00:45:00</div>
<div class="abs bdt" style="left:450px;top:369px">2415</div>
<div class="abs bdt" style="left:599px;top:369px">37.10</div>
<div class="abs bdt" style="left:718px;top:369px">0.00</div>
<div class="abs bdt" style="left:837.5px;top:369px">37.10</div>
<div class="abs bdt" style="left:955.5px;top:369px">69.9</div>
<div class="abs bdt" style="left:1057.0px;top:369px">0</div>
<div class="abs bdt" style="left:1152.0px;top:369px">68.1</div>
<div class="abs bdt" style="left:1255.0px;top:369px">63</div>
<div class="abs bdt" style="left:1366.5px;top:369px">0</div>
<div class="abs bdt" style="left:1495.5px;top:369px">0.98</div>
<div class="abs" style="left:0;top:411px;width:1573px;height:41px;background:#f9f9f9;border-bottom:1px solid #dddddd"></div>
<div class="abs bdt" style="left:10px;top:410px">水城甲进线</div>
<div class="abs bdt" style="left:175px;top:410px">2020-12-27 00:50:00</div>
<div class="abs bdt" style="left:450px;top:410px">2415</div>
<div class="abs bdt" style="left:599px;top:410px">37.10</div>
<div class="abs bdt" style="left:718px;top:410px">0.00</div>
<div class="abs bdt" style="left:837.5px;top:410px">37.10</div>
<div class="abs bdt" style="left:955.5px;top:410px">67.5</div>
<div class="abs bdt" style="left:1057.0px;top:410px">0</div>
<div class="abs bdt" style="left:1152.0px;top:410px">66.6</div>
<div class="abs bdt" style="left:1255.0px;top:410px">69.3</div>
<div class="abs bdt" style="left:1366.5px;top:410px">0</div>
<div class="abs bdt" style="left:1495.5px;top:410px">0.98</div>
<div class="abs" style="left:0;top:452px;width:1573px;height:41px;background:#ffffff;border-bottom:1px solid #dddddd"></div>
<div class="abs bdt" style="left:10px;top:451px">水城甲进线</div>
<div class="abs bdt" style="left:175px;top:451px">2020-12-27 00:55:00</div>
<div class="abs bdt" style="left:450px;top:451px">2415</div>
<div class="abs bdt" style="left:599px;top:451px">37.10</div>
<div class="abs bdt" style="left:718px;top:451px">0.00</div>
<div class="abs bdt" style="left:837.5px;top:451px">37.10</div>
<div class="abs bdt" style="left:955.5px;top:451px">67.8</div>
<div class="abs bdt" style="left:1057.0px;top:451px">0</div>
<div class="abs bdt" style="left:1152.0px;top:451px">66</div>
<div class="abs bdt" style="left:1255.0px;top:451px">67.2</div>
<div class="abs bdt" style="left:1366.5px;top:451px">0</div>
<div class="abs bdt" style="left:1495.5px;top:451px">0.99</div>
<div class="abs" style="left:0;top:493px;width:1573px;height:41px;background:#f9f9f9;border-bottom:1px solid #dddddd"></div>
<div class="abs bdt" style="left:10px;top:492px">水城甲进线</div>
<div class="abs bdt" style="left:175px;top:492px">2020-12-27 01:00:00</div>
<div class="abs bdt" style="left:450px;top:492px">2415</div>
<div class="abs bdt" style="left:599px;top:492px">37.10</div>
<div class="abs bdt" style="left:718px;top:492px">0.00</div>
<div class="abs bdt" style="left:837.5px;top:492px">37.10</div>
<div class="abs bdt" style="left:955.5px;top:492px">69.6</div>
<div class="abs bdt" style="left:1057.0px;top:492px">0</div>
<div class="abs bdt" style="left:1152.0px;top:492px">65.7</div>
<div class="abs bdt" style="left:1255.0px;top:492px">66.15</div>
<div class="abs bdt" style="left:1366.5px;top:492px">0</div>
<div class="abs bdt" style="left:1495.5px;top:492px">0.95</div>
<div class="abs" style="left:0;top:534px;width:1573px;height:41px;background:#ffffff;border-bottom:1px solid #dddddd"></div>
<div class="abs bdt" style="left:10px;top:533px">水城甲进线</div>
<div class="abs bdt" style="left:175px;top:533px">2020-12-27 01:05:00</div>
<div class="abs bdt" style="left:450px;top:533px">2415</div>
<div class="abs bdt" style="left:599px;top:533px">37.10</div>
<div class="abs bdt" style="left:718px;top:533px">0.00</div>
<div class="abs bdt" style="left:837.5px;top:533px">37.10</div>
<div class="abs bdt" style="left:955.5px;top:533px">69</div>
<div class="abs bdt" style="left:1057.0px;top:533px">0</div>
<div class="abs bdt" style="left:1152.0px;top:533px">68.7</div>
<div class="abs bdt" style="left:1255.0px;top:533px">68.25</div>
<div class="abs bdt" style="left:1366.5px;top:533px">0</div>
<div class="abs bdt" style="left:1495.5px;top:533px">0.97</div>
<div class="abs" style="left:0;top:575px;width:1573px;height:41px;background:#f9f9f9;border-bottom:1px solid #dddddd"></div>
<div class="abs bdt" style="left:10px;top:574px">水城甲进线</div>
<div class="abs bdt" style="left:175px;top:574px">2020-12-27 01:10:00</div>
<div class="abs bdt" style="left:450px;top:574px">2415</div>
<div class="abs bdt" style="left:599px;top:574px">37.10</div>
<div class="abs bdt" style="left:718px;top:574px">0.00</div>
<div class="abs bdt" style="left:837.5px;top:574px">37.10</div>
<div class="abs bdt" style="left:955.5px;top:574px">71.1</div>
<div class="abs bdt" style="left:1057.0px;top:574px">0</div>
<div class="abs bdt" style="left:1152.0px;top:574px">68.1</div>
<div class="abs bdt" style="left:1255.0px;top:574px">59.85</div>
<div class="abs bdt" style="left:1366.5px;top:574px">0</div>
<div class="abs bdt" style="left:1495.5px;top:574px">0.98</div>
<div class="abs" style="left:0;top:616px;width:1573px;height:41px;background:#ffffff;border-bottom:1px solid #dddddd"></div>
<div class="abs bdt" style="left:10px;top:615px">水城甲进线</div>
<div class="abs bdt" style="left:175px;top:615px">2020-12-27 01:15:00</div>
<div class="abs bdt" style="left:450px;top:615px">2415</div>
<div class="abs bdt" style="left:599px;top:615px">37.10</div>
<div class="abs bdt" style="left:718px;top:615px">0.00</div>
<div class="abs bdt" style="left:837.5px;top:615px">37.10</div>
<div class="abs bdt" style="left:955.5px;top:615px">65.4</div>
<div class="abs bdt" style="left:1057.0px;top:615px">0</div>
<div class="abs bdt" style="left:1152.0px;top:615px">66.3</div>
<div class="abs bdt" style="left:1255.0px;top:615px">68.25</div>
<div class="abs bdt" style="left:1366.5px;top:615px">0</div>
<div class="abs bdt" style="left:1495.5px;top:615px">0.97</div>
<div class="abs" style="left:0;top:657px;width:1573px;height:41px;background:#f9f9f9;border-bottom:1px solid #dddddd"></div>
<div class="abs bdt" style="left:10px;top:656px">水城甲进线</div>
<div class="abs bdt" style="left:175px;top:656px">2020-12-27 01:20:00</div>
<div class="abs bdt" style="left:450px;top:656px">2415</div>
<div class="abs bdt" style="left:599px;top:656px">37.10</div>
<div class="abs bdt" style="left:718px;top:656px">0.00</div>
<div class="abs bdt" style="left:837.5px;top:656px">37.10</div>
<div class="abs bdt" style="left:955.5px;top:656px">65.7</div>
<div class="abs bdt" style="left:1057.0px;top:656px">0</div>
<div class="abs bdt" style="left:1152.0px;top:656px">64.8</div>
<div class="abs bdt" style="left:1255.0px;top:656px">68.25</div>
<div class="abs bdt" style="left:1366.5px;top:656px">0</div>
<div class="abs bdt" style="left:1495.5px;top:656px">0.97</div>
<div class="abs" style="left:0;top:698px;width:1573px;height:41px;background:#ffffff;border-bottom:1px solid #dddddd"></div>
<div class="abs bdt" style="left:10px;top:697px">水城甲进线</div>
<div class="abs bdt" style="left:175px;top:697px">2020-12-27 01:25:00</div>
<div class="abs bdt" style="left:450px;top:697px">2415</div>
<div class="abs bdt" style="left:599px;top:697px">37.10</div>
<div class="abs bdt" style="left:718px;top:697px">0.00</div>
<div class="abs bdt" style="left:837.5px;top:697px">37.10</div>
<div class="abs bdt" style="left:955.5px;top:697px">67.8</div>
<div class="abs bdt" style="left:1057.0px;top:697px">0</div>
<div class="abs bdt" style="left:1152.0px;top:697px">68.4</div>
<div class="abs bdt" style="left:1255.0px;top:697px">67.2</div>
<div class="abs bdt" style="left:1366.5px;top:697px">0</div>
<div class="abs bdt" style="left:1495.5px;top:697px">0.98</div>
<div class="abs" style="left:0;top:739px;width:1573px;height:41px;background:#f9f9f9;border-bottom:1px solid #dddddd"></div>
<div class="abs bdt" style="left:10px;top:738px">水城甲进线</div>
<div class="abs bdt" style="left:175px;top:738px">2020-12-27 01:30:00</div>
<div class="abs bdt" style="left:450px;top:738px">2415</div>
<div class="abs bdt" style="left:599px;top:738px">37.10</div>
<div class="abs bdt" style="left:718px;top:738px">0.00</div>
<div class="abs bdt" style="left:837.5px;top:738px">37.10</div>
<div class="abs bdt" style="left:955.5px;top:738px">68.1</div>
<div class="abs bdt" style="left:1057.0px;top:738px">0</div>
<div class="abs bdt" style="left:1152.0px;top:738px">69.3</div>
<div class="abs bdt" style="left:1255.0px;top:738px">65.1</div>
<div class="abs bdt" style="left:1366.5px;top:738px">0</div>
<div class="abs bdt" style="left:1495.5px;top:738px">0.93</div>
<div class="abs" style="left:0;top:780px;width:1573px;height:41px;background:#ffffff;border-bottom:1px solid #dddddd"></div>
<div class="abs bdt" style="left:10px;top:779px">水城甲进线</div>
<div class="abs bdt" style="left:175px;top:779px">2020-12-27 01:35:00</div>
<div class="abs bdt" style="left:450px;top:779px">2415</div>
<div class="abs bdt" style="left:599px;top:779px">37.10</div>
<div class="abs bdt" style="left:718px;top:779px">0.00</div>
<div class="abs bdt" style="left:837.5px;top:779px">37.10</div>
<div class="abs bdt" style="left:955.5px;top:779px">71.1</div>
<div class="abs bdt" style="left:1057.0px;top:779px">0</div>
<div class="abs bdt" style="left:1152.0px;top:779px">70.8</div>
<div class="abs bdt" style="left:1255.0px;top:779px">67.2</div>
<div class="abs bdt" style="left:1366.5px;top:779px">0</div>
<div class="abs bdt" style="left:1495.5px;top:779px">0.91</div>
<div class="abs" style="left:0;top:821px;width:1573px;height:41px;background:#f9f9f9;border-bottom:1px solid #dddddd"></div>
<div class="abs bdt" style="left:10px;top:820px">水城甲进线</div>
<div class="abs bdt" style="left:175px;top:820px">2020-12-27 01:40:00</div>
<div class="abs bdt" style="left:450px;top:820px">2415</div>
<div class="abs bdt" style="left:599px;top:820px">37.10</div>
<div class="abs bdt" style="left:718px;top:820px">0.00</div>
<div class="abs bdt" style="left:837.5px;top:820px">37.10</div>
<div class="abs bdt" style="left:955.5px;top:820px">70.2</div>
<div class="abs bdt" style="left:1057.0px;top:820px">0</div>
<div class="abs bdt" style="left:1152.0px;top:820px">71.1</div>
<div class="abs bdt" style="left:1255.0px;top:820px">67.2</div>
<div class="abs bdt" style="left:1366.5px;top:820px">0</div>
<div class="abs bdt" style="left:1495.5px;top:820px">0.96</div>
<div class="abs" style="left:0;top:862px;width:1573px;height:41px;background:#ffffff;border-bottom:1px solid #dddddd"></div>
<div class="abs bdt" style="left:10px;top:861px">水城甲进线</div>
<div class="abs bdt" style="left:175px;top:861px">2020-12-27 01:45:00</div>
<div class="abs bdt" style="left:450px;top:861px">2415</div>
<div class="abs bdt" style="left:599px;top:861px">37.10</div>
<div class="abs bdt" style="left:718px;top:861px">0.00</div>
<div class="abs bdt" style="left:837.5px;top:861px">37.10</div>
<div class="abs bdt" style="left:955.5px;top:861px">72</div>
<div class="abs bdt" style="left:1057.0px;top:861px">0</div>
<div class="abs bdt" style="left:1152.0px;top:861px">71.7</div>
<div class="abs bdt" style="left:1255.0px;top:861px">69.3</div>
<div class="abs bdt" style="left:1366.5px;top:861px">0</div>
<div class="abs bdt" style="left:1495.5px;top:861px">0.93</div>
<div class="abs" style="left:0;top:903px;width:1573px;height:41px;background:#f9f9f9;border-bottom:1px solid #dddddd"></div>
<div class="abs bdt" style="left:10px;top:902px">水城甲进线</div>
<div class="abs bdt" style="left:175px;top:902px">2020-12-27 01:50:00</div>
<div class="abs bdt" style="left:450px;top:902px">2415</div>
<div class="abs bdt" style="left:599px;top:902px">37.10</div>
<div class="abs bdt" style="left:718px;top:902px">0.00</div>
<div class="abs bdt" style="left:837.5px;top:902px">37.10</div>
<div class="abs bdt" style="left:955.5px;top:902px">67.2</div>
<div class="abs bdt" style="left:1057.0px;top:902px">0</div>
<div class="abs bdt" style="left:1152.0px;top:902px">67.2</div>
<div class="abs bdt" style="left:1255.0px;top:902px">64.05</div>
<div class="abs bdt" style="left:1366.5px;top:902px">0</div>
<div class="abs bdt" style="left:1495.5px;top:902px">0.95</div>
<div class="abs" style="left:0;top:944px;width:1573px;height:41px;background:#ffffff;border-bottom:1px solid #dddddd"></div>
<div class="abs bdt" style="left:10px;top:943px">水城甲进线</div>
<div class="abs bdt" style="left:175px;top:943px">2020-12-27 01:55:00</div>
<div class="abs bdt" style="left:450px;top:943px">2415</div>
<div class="abs bdt" style="left:599px;top:943px">37.10</div>
<div class="abs bdt" style="left:718px;top:943px">0.00</div>
<div class="abs bdt" style="left:837.5px;top:943px">37.10</div>
<div class="abs bdt" style="left:1057.0px;top:943px">0</div>
<div class="abs bdt" style="left:1366.5px;top:943px">0</div>
<div class="abs" style="left:163.5px;top:0;width:1px;height:948px;background:#dddddd"></div>
<div class="abs" style="left:438.5px;top:0;width:1px;height:948px;background:#dddddd"></div>
<div class="abs" style="left:587.5px;top:0;width:1px;height:948px;background:#dddddd"></div>
<div class="abs" style="left:706.5px;top:0;width:1px;height:948px;background:#dddddd"></div>
<div class="abs" style="left:826.0px;top:0;width:1px;height:948px;background:#dddddd"></div>
<div class="abs" style="left:944.0px;top:0;width:1px;height:948px;background:#dddddd"></div>
<div class="abs" style="left:1045.5px;top:0;width:1px;height:948px;background:#dddddd"></div>
<div class="abs" style="left:1140.5px;top:0;width:1px;height:948px;background:#dddddd"></div>
<div class="abs" style="left:1243.5px;top:0;width:1px;height:948px;background:#dddddd"></div>
<div class="abs" style="left:1355.0px;top:0;width:1px;height:948px;background:#dddddd"></div>
<div class="abs" style="left:1484.0px;top:0;width:1px;height:948px;background:#dddddd"></div>
</div>
<div class="abs" style="left:2133px;top:178px;width:9px;height:948px;background:#f1f1f1"></div>
<div class="abs" style="left:2133px;top:179px;width:9px;height:167px;background:#c1c1c1"></div>
</body></html>
